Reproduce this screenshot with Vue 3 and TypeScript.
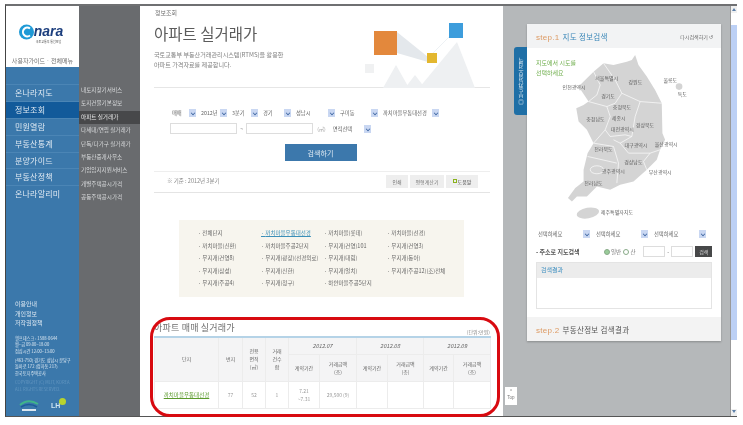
<script setup lang="ts">
const mainMenu = ['온나라지도', '정보조회', '민원열람', '부동산통계', '분양가이드', '부동산정책', '온나라알리미']
const subMenu = ['내토지찾기서비스', '토지건물기본정보', '아파트 실거래가', '다세대/연립 실거래가', '단독/다가구 실거래가', '부동산중개사무소', '기업입지지원서비스', '개별주택공시가격', '공동주택공시가격']
const row1 = [
  { t: '매매', w: 27 }, { t: '2012년', w: 29 }, { t: '3분기', w: 29 }, { t: '경기', w: 31 },
  { t: '성남시', w: 42 }, { t: '구미동', w: 41 }, { t: '까치마을우통대선경', w: 59 },
]
const complexes = [
  '전체단지', '까치마을우통대선경', '까치마을(롯데)', '까치마을(선경)',
  '까치마을(신환)', '까치마을주공2단지', '무지개(건영)101', '무지개(건영3)',
  '무지개(건영8)', '무지개(광장)(선경의료)', '무지개(대림)', '무지개(동아)',
  '무지개(삼성)', '무지개(신한)', '무지개(얼치)', '무지개(주공12)(조)전체',
  '무지개(주공4)', '무지개(청구)', '하얀마을주공5단지',
]
const months = ['2012.07', '2012.08', '2012.09']
const labels = [
  { t: '서울특별시', x: 285, y: 240 }, { t: '강원도', x: 385, y: 252 }, { t: '울릉도', x: 490, y: 246 },
  { t: '인천광역시', x: 187, y: 266 }, { t: '경기도', x: 303, y: 295 }, { t: '독도', x: 533, y: 289 },
  { t: '충청북도', x: 338, y: 328 }, { t: '충청남도', x: 258, y: 364 }, { t: '세종시', x: 335, y: 360 },
  { t: '대전광역시', x: 332, y: 393 }, { t: '경상북도', x: 407, y: 381 }, { t: '전라북도', x: 282, y: 455 },
  { t: '대구광역시', x: 373, y: 441 }, { t: '울산광역시', x: 464, y: 439 }, { t: '경상남도', x: 372, y: 492 },
  { t: '광주광역시', x: 305, y: 520 }, { t: '부산광역시', x: 446, y: 522 }, { t: '전라남도', x: 252, y: 557 },
  { t: '제주특별자치도', x: 302, y: 643 },
]
</script>

<template>
  <div class="page">
    <div class="frame">
      <aside class="nav">
        <div class="nav-main">
          <div class="brand">
            <div class="logo">
              <svg width="15" height="18" viewBox="0 0 15 18"><circle cx="7.5" cy="9" r="7.5" fill="#1f9ad6" /><path d="M11 5.5 A4.4 4.4 0 1 0 11 12.5" fill="none" stroke="#fff" stroke-width="2" /></svg>
              <div class="word"><b>nara</b><small>국토교통부 통합포털</small></div>
            </div>
            <p>사용자가이드 · 전체메뉴</p>
          </div>
          <ul class="menu">
            <li v-for="(m, i) in mainMenu" :key="m" :class="{ on: i === 1 }">{{ m }}</li>
          </ul>
          <div class="info">
            <p class="l">이용안내</p><p class="l">개인정보</p><p class="l">저작권정책</p>
            <div class="fine">
              <p>헬프데스크 : 1588-0644</p><p>월~금 09:00~18:00</p><p>점심시간 12:00~13:00</p>
            </div>
            <div class="fine">
              <p>(463-750) 경기도 성남시 분당구</p><p>돌마로 172 (정자동 217)</p><p>한국토지주택공사</p>
            </div>
            <div class="fine faded"><p>COPYRIGHT (C) MLIT, KOREA</p><p>ALL RIGHTS RESERVED.</p></div>
            <div class="orgs">
              <svg width="20" height="13" viewBox="0 0 20 13"><path d="M1 6 Q9 -1 19 5" fill="none" stroke="#3fb58a" stroke-width="2" /><path d="M2 8 Q10 3 18 8" fill="none" stroke="#1c5c9a" stroke-width="1.6" /><rect x="3" y="10" width="14" height="2" fill="#dbe7f0" /></svg>
              <div class="lh"><span>LH</span><i></i></div>
            </div>
          </div>
        </div>
        <ul class="nav-sub">
          <li v-for="(s, i) in subMenu" :key="s" :class="{ on: i === 2 }">{{ s }}</li>
        </ul>
      </aside>

      <main class="content">
        <header class="hero">
          <p class="crumb">정보조회</p>
          <h1>아파트 실거래가</h1>
          <p class="desc">국토교통부 부동산거래관리시스템(RTMS)을 활용한<br />아파트 가격자료를 제공합니다.</p>
          <svg class="art" width="135" height="72" viewBox="0 0 135 72">
            <path d="M40 72 L53 49 L66 72Z M62 72 L72 59 L82 72Z M76 72 L114 26 L132 72Z" fill="#eef0f2" />
            <path d="M54 16 L85 41 L85 46 L54 37Z" fill="#e4e8ec" />
            <path d="M90 37 L107 20" stroke="#edf1f4" stroke-width="1" />
            <rect x="31" y="15" width="23" height="24" fill="#e3883c" />
            <rect x="84" y="37" width="10" height="10" fill="#e3b72f" />
            <rect x="106" y="7" width="14" height="15" fill="#3d9ddc" />
            <rect x="22" y="48" width="9" height="9" fill="#f0f1f2" />
          </svg>
        </header>

        <form class="filter" @submit.prevent>
          <div class="row">
            <span v-for="s in row1" :key="s.t" class="sel" :style="{ width: s.w + 'px' }">{{ s.t }}<i></i></span>
          </div>
          <div class="row second">
            <span class="inp"></span><em>~</em><span class="inp"></span><em class="unit">(㎡)</em>
            <span class="sel area">면적선택<i></i></span>
          </div>
          <button class="go">검색하기</button>
          <div class="base">
            <span>※ 기준 : 2012년 3분기</span>
            <div class="btns"><span>인쇄</span><span class="calc">평형계산기</span><span class="help"><i></i>도움말</span></div>
          </div>
        </form>

        <ul class="complex">
          <li v-for="(c, i) in complexes" :key="c" :class="{ act: i === 1 }">{{ c }}</li>
        </ul>

        <section class="result">
          <div class="result-head"><h2>아파트 매매 실거래가</h2><span>(단위:만원)</span></div>
          <table>
            <colgroup>
              <col class="c64" /><col class="c24" /><col class="c23" /><col class="c23" />
              <col class="c31" /><col class="c37" /><col class="c31" /><col class="c36" />
              <col class="c30" /><col class="c37" />
            </colgroup>
            <thead>
              <tr class="h1">
                <th rowspan="2">단지</th><th rowspan="2">번지</th><th rowspan="2">전용<br />면적<br />(㎡)</th><th rowspan="2">거래<br />건수<br />합</th>
                <th v-for="m in months" :key="m" colspan="2" class="mon">{{ m }}</th>
              </tr>
              <tr class="h2">
                <template v-for="m in months" :key="m"><th>계약기간</th><th>거래금액<br />(층)</th></template>
              </tr>
            </thead>
            <tbody>
              <tr>
                <td class="name">까치마을우통대선경</td><td>77</td><td>52</td><td>1</td><td>7.21<br />~7.31</td><td>29,500 (9)</td>
                <td></td><td></td><td></td><td></td>
              </tr>
            </tbody>
          </table>
          <div class="ring"></div>
        </section>
      </main>

      <section class="panel">
        <div class="tab"><span>◎ 부동산정보 검색</span></div>
        <div class="top">^<br />Top</div>
        <div class="card">
          <div class="card-head">
            <h3><b>step.1</b> 지도 정보검색</h3>
            <span>다시검색하기 ↺</span>
          </div>
          <div class="map-area">
            <p class="hint">지도에서 시도를<br />선택하세요</p>
            <svg class="map" width="127" height="173" viewBox="180 150 380 520">
              <g fill="#d4d4d4">
                <path d="M405 165 L415 195 L440 230 L465 270 L485 310 L487 400 L495 420 L480 450 L470 480 L440 510 L400 545 L360 555 L330 570 L290 560 L260 590 L230 590 L215 605 L203 595 L225 565 L250 545 L250 510 L262 460 L280 430 L260 390 L235 365 L228 325 L250 315 L265 305 L255 290 L235 260 L260 235 L280 215 L310 190 L340 195 L380 185 L395 180Z" />
                <ellipse cx="263" cy="640" rx="34" ry="16" transform="rotate(-10 263 640)" />
                <ellipse cx="537" cy="260" rx="10" ry="10" />
                <circle cx="550" cy="278" r="2" />
              </g>
              <g fill="none" stroke="#fff" stroke-width="2">
                <path d="M280 215 L300 255 L290 285 L265 305" />
                <path d="M310 190 L345 240 L365 280 L420 305 L485 310" />
                <path d="M265 305 L320 320 L345 310 L365 280" />
                <path d="M320 320 L330 350 L315 390 L280 430" />
                <path d="M420 305 L405 350 L395 410 L360 430 L340 420" />
                <path d="M315 390 L330 410 L375 405 L395 410" />
                <path d="M280 430 L340 440 L355 490 L350 550" />
                <path d="M360 430 L385 460 L450 460 L480 450" />
                <path d="M262 470 L350 490" />
                <path d="M440 510 L430 485 L450 460" />
                <ellipse cx="290" cy="510" rx="20" ry="12" />
              </g>
              <text v-for="l in labels" :key="l.t" :x="l.x" :y="l.y" class="ml">{{ l.t }}</text>
            </svg>
          </div>
          <div class="sel3">
            <span v-for="n in 3" :key="n" class="sel">선택하세요<i></i></span>
          </div>
          <div class="addr">
            <b>- 주소로 지도검색</b>
            <span class="radio sel-r">일반</span><span class="radio">산</span>
            <span class="inp"></span><em>-</em><span class="inp"></span>
            <button>검색</button>
          </div>
          <div class="results"><h4>검색결과</h4></div>
          <div class="card-foot"><h3><b>step.2</b> 부동산정보 검색결과</h3></div>
        </div>
      </section>

      <div class="scroll"><i class="arrow up"></i><span class="gap"></span><span class="thumb"></span><span class="rest"></span><i class="arrow"></i></div>
    </div>
  </div>
</template>

<style scoped>
* { box-sizing: border-box; }
p, h1, h2, h3, h4, ul { margin: 0; padding: 0; font-weight: normal; }
ul { list-style: none; }
em { font-style: normal; }
.page { width: 743px; height: 425px; padding: 4px 6px 8px 5px; background: #fff; overflow: hidden; filter: blur(.5px); font-family: "Noto Sans CJK KR", "Noto Sans", sans-serif; color: #6e6e6e; }
.frame { display: flex; height: 413px; border-top: 2px solid #6f7072; border-bottom: 1px solid #555; border-left: 1px solid #444; }
.nav { display: flex; width: 134px; flex: none; }
.nav-main { width: 73px; background: #3b78ab; display: flex; flex-direction: column; }
.brand { height: 61px; background: #fff; padding-top: 17px; text-align: center; }
.logo { display: flex; justify-content: center; align-items: flex-start; height: 26px; padding-right: 3px; }
.logo b { display: block; font: italic bold 14px/17px "Liberation Sans", sans-serif; color: #1d3f7e; }
.logo small { display: block; font-size: 3px; line-height: 5px; color: #555; white-space: nowrap; }
.brand p { margin-top: 8px; font-size: 6px; line-height: 8px; color: #707070; white-space: nowrap; }
.menu { margin-top: 17px; }
.menu li { height: 16.9px; padding-left: 9px; font-size: 8px; line-height: 16.9px; color: #dfe9f2; letter-spacing: .2px; border-top: 1px solid #4b85b5; white-space: nowrap; }
.menu li.on { background: #125a9a; }
.info { margin-top: auto; padding: 0 0 4px 9px; color: #dbe7f1; }
.info .l { font-size: 6px; line-height: 9.6px; }
.fine { margin-top: 7px; font-size: 4.2px; line-height: 6.4px; white-space: nowrap; }
.fine + .fine { margin-top: 3px; }
.faded { color: #6396c0; margin-top: 2px; }
.orgs { display: flex; gap: 12px; align-items: center; margin-top: 7px; padding-left: 4px; }
.lh { display: flex; align-items: flex-start; font: bold 7px/9px "Liberation Sans", sans-serif; color: #cfe6f2; }
.lh i { width: 7px; height: 7px; border-radius: 50%; background: #b7d32e; margin: -3px 0 0 -1px; }
.nav-sub { flex: 1; background: #696b6e; padding-top: 78px; }
.nav-sub li { height: 13.4px; padding-left: 2px; font-size: 5.6px; line-height: 13.4px; color: #d8dadc; white-space: nowrap; }
.nav-sub li.on { background: #47484a; color: #eee; }
.content { width: 363px; flex: none; background: #fff; padding: 0 13px 0 14px; display: flex; flex-direction: column; }
.hero { position: relative; height: 82px; border-bottom: 1px solid #e6e6e6; }
.crumb { padding: 2px 0 0 1px; font-size: 6px; line-height: 9px; }
h1 { margin-top: 6px; font-size: 15.5px; line-height: 21px; color: #5c5c5c; }
.desc { margin-top: 6px; font-size: 6.1px; line-height: 10px; color: #808080; white-space: nowrap; }
.art { position: absolute; left: 189px; top: 10px; }
.filter { display: flex; flex-direction: column; }
.row { display: flex; gap: 2px; margin: 20px 0 0 16px; }
.row.second { margin-top: 5px; height: 11px; align-items: center; gap: 3px; }
.sel { position: relative; display: block; height: 10px; flex: none; padding-left: 2px; font-size: 5.3px; line-height: 10px; color: #666; background: #fff; white-space: nowrap; overflow: hidden; }
.sel i { position: absolute; right: 1px; top: 1px; width: 7px; height: 8px; background: #c9d7f2; }
.sel i::after { content: ""; position: absolute; left: 2px; top: 2px; width: 3px; height: 3px; border-right: 1px solid #36609e; border-bottom: 1px solid #36609e; transform: rotate(45deg) scale(.8); }
.inp { display: block; height: 11px; background: #fff; border: 1px solid #ddd; }
.second .inp { width: 67px; }
.second em { font-size: 6px; color: #999; }
.second .unit { font-size: 5px; margin-left: 1px; margin-right: 2px; }
.area { width: 41px; }
.go { align-self: center; width: 72px; height: 17px; margin: 10px 0 0 -3px; border: 0; padding: 0; background: #3c78ac; color: #dfeaf3; font: 7px "Noto Sans CJK KR", sans-serif; }
.base { display: flex; justify-content: space-between; align-items: center; margin-top: 10px; height: 22px; padding: 0 13px 2px 13px; border-top: 1px solid #eee; border-bottom: 1px solid #e4e4e4; font-size: 5.5px; color: #888; }
.btns { display: flex; gap: 2px; margin-right: -1px; }
.btns span { display: flex; align-items: center; justify-content: center; width: 22px; height: 13px; background: #eee; color: #777; font-size: 5px; }
.btns .calc { width: 34px; }
.btns .help { width: 32px; color: #555; gap: 1px; }
.help i { width: 4px; height: 4px; border: 1px solid #8ab21c; }
.complex { display: grid; grid-template-columns: 63px 63px 63px 1fr; grid-auto-rows: 12.6px; align-content: start; width: 285px; height: 77px; margin: 27px 0 0 25px; padding: 7px 0 0 19px; background: #f7f5ee; font-size: 5.5px; line-height: 12.6px; color: #666; white-space: nowrap; }
.complex li::before { content: "· "; }
.complex .act { color: #3c8fb8; text-decoration: underline; }
.result { position: relative; margin-top: 20px; }
.result-head { display: flex; justify-content: space-between; align-items: flex-end; height: 19px; padding-bottom: 1px; }
h2 { font-size: 9px; line-height: 14px; color: #6e6e6e; letter-spacing: .2px; }
.result-head span { font-size: 5px; color: #888; }
table { width: 336px; border-collapse: collapse; table-layout: fixed; border-top: 2px solid #b5d3e7; font-size: 5px; line-height: 8px; color: #666; text-align: center; }
.c64 { width: 64px; } .c24 { width: 24px; } .c23 { width: 23px; } .c31 { width: 31px; } .c37 { width: 37px; } .c36 { width: 36px; } .c30 { width: 30px; }
th, td { padding: 0; font-weight: normal; border: 1px solid #ececec; }
th { background: #f4f4f5; }
.h1 { height: 17px; }
.h2 { height: 27px; }
.mon { font-style: italic; font-size: 5.5px; }
tbody tr { height: 27px; border-bottom: 1px solid #ddd; }
td { color: #999; vertical-align: middle; }
.name { color: #5b9a2c; text-decoration: underline; font-size: 5.5px; white-space: nowrap; }
.ring { position: absolute; left: -4px; right: -10px; top: 0; height: 100px; border: 3.5px solid #d80a10; border-radius: 20px; pointer-events: none; }
.panel { position: relative; width: 227px; flex: none; background: #b5b8ba; padding: 18px 9px 0 24px; }
.tab { position: absolute; left: 11px; top: 41px; width: 13px; height: 68px; background: #1f6fa6; border-radius: 3px 0 0 3px; display: flex; align-items: center; justify-content: center; }
.tab span { writing-mode: vertical-rl; transform: rotate(180deg); font-size: 5.5px; color: #dce9f2; white-space: nowrap; }
.top { position: absolute; left: 2px; top: 381px; width: 12px; height: 18px; padding-top: 2px; background: #fff; color: #777; font: 4.5px/6px "Liberation Sans", sans-serif; text-align: center; }
.card { width: 194px; background: #fff; box-shadow: 0 1px 2px rgba(0,0,0,.25); }
.card-head { display: flex; justify-content: space-between; align-items: center; height: 24px; padding: 0 8px 0 9px; background: #f2f3f4; }
h3 { font-size: 7.5px; color: #3a87b8; letter-spacing: .3px; }
h3 b { font-weight: normal; color: #dd9a63; font-family: "Liberation Sans", sans-serif; font-size: 8px; margin-right: 1px; }
.card-head span { font-size: 5px; color: #666; }
.map-area { position: relative; height: 181px; padding: 10px 0 0 9px; }
.hint { font-size: 6px; line-height: 9.5px; color: #6fae4c; }
.map { position: absolute; left: 33px; top: 2px; }
.ml { font-size: 15px; fill: #5c5c5c; font-family: "Noto Sans CJK KR", sans-serif; }
.sel3 { display: flex; gap: 3px; padding-left: 9px; }
.sel3 .sel { width: 55px; height: 10px; }
.addr { display: flex; align-items: center; height: 11px; margin-top: 7px; padding: 0 9px; font-size: 5.5px; }
.addr b { font-weight: bold; color: #555; width: 70px; font-size: 6px; white-space: nowrap; }
.radio { width: 20px; color: #777; white-space: nowrap; }
.radio::before { content: ""; display: inline-block; width: 4px; height: 4px; margin-right: 1px; border: 1px solid #8a8; border-radius: 50%; vertical-align: middle; }
.sel-r::before { background: #9c9; }
.addr .inp { width: 23px; }
.addr em { width: 6px; text-align: center; color: #888; }
.addr button { width: 17px; height: 11px; margin-left: 2px; padding: 0; border: 0; background: #474849; color: #ddd; font: 5px "Noto Sans CJK KR", sans-serif; }
.results { height: 47px; margin: 5px 9px 0; border: 1px solid #e4e4e4; }
h4 { height: 15px; padding-left: 4px; background: #ececec; font-size: 6px; line-height: 14px; color: #3e8fc0; }
.card-foot { display: flex; align-items: center; height: 24px; margin-top: 8px; padding-left: 9px; background: #f3f3f3; }
.card-foot h3 { color: #555; }
.scroll { display: flex; flex-direction: column; width: 7px; flex: none; background: #fbfbfb; border-left: 1px solid #999; }
.arrow { height: 7px; flex: none; position: relative; background: #f0f0f0; }
.arrow::after { content: ""; position: absolute; left: 1px; top: 1px; width: 0; height: 0; border: 2px solid transparent; border-top: 3px solid #5c7fa8; }
.arrow.up::after { top: 0; border-top: 2px solid transparent; border-bottom: 3px solid #5c7fa8; }
.gap { height: 12px; background: #fff; }
.thumb { height: 315px; background: #bcd0f5; }
.rest { flex: 1; background: #fff; }
</style>
